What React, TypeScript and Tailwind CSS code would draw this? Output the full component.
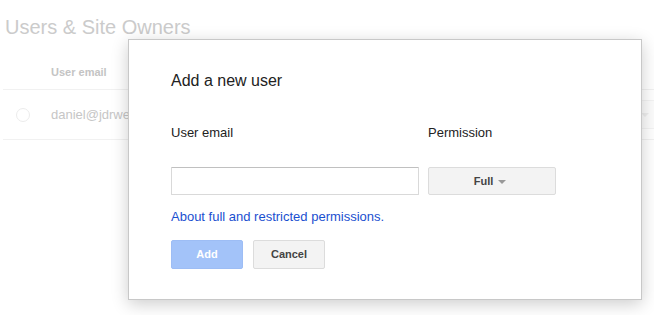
import React from "react";

export default function App() {
  return (
    <div
      className="relative w-[654px] h-[315px] overflow-hidden bg-white"
      style={{ fontFamily: '"Liberation Sans", Arial, sans-serif' }}
    >
      {/* background page (faded) */}
      <div className="pt-[15px]">
        <h1 className="pl-[5px] text-[20px] leading-[24px] text-[#cbcbcb]">Users &amp; Site Owners</h1>
        <div className="mt-[17px] pl-[3px]">
          <div className="h-[34px] flex items-center pl-[48px] text-[11px] font-bold text-[#c4c4c4] border-b border-[#f1f1f1]">
            User email
          </div>
          <div className="h-[50px] flex items-center border-b border-[#f1f1f1]">
            <div className="ml-[13px] w-[14px] h-[14px] rounded-full border border-[#ececec]" />
            <div className="ml-[21px] text-[13px] text-[#c6c6c6] flex-1">daniel@jdrwebdesign.com</div>
            <div className="mr-[-20px] w-[100px] h-[29px] border border-[#f3f3f3] bg-[#fcfcfc] flex items-center justify-end pr-[24px]">
              <div className="w-0 h-0 border-l-[4px] border-r-[4px] border-t-[4px] border-l-transparent border-r-transparent border-t-[#eeeeee]" />
            </div>
          </div>
        </div>
      </div>

      {/* dialog */}
      <div className="absolute left-[128px] top-[39px] w-[514px] h-[261px] bg-white border border-[#c8c8c8] shadow-[0_4px_16px_rgba(0,0,0,0.2)] pl-[42px] pt-[31px]">
        <div className="text-[16px] leading-[20px] text-[#222]">Add a new user</div>
        <div className="mt-[34px] grid grid-cols-[248px_128px] gap-x-[9px] text-[13px] leading-[16px] text-[#222]">
          <div>User email</div>
          <div>Permission</div>
        </div>
        <div className="mt-[26px] flex gap-[9px]">
          <input
            className="w-[248px] h-[28px] border border-[#d9d9d9] border-t-[#c0c0c0] rounded-[1px] px-[8px] text-[13px] outline-none"
          />
          <div className="w-[128px] h-[28px] border border-[#dcdcdc] rounded-[2px] bg-[#f3f3f3] flex items-center justify-center gap-[5px] pr-[4px]">
            <span className="text-[11px] font-bold text-[#444]">Full</span>
            <span className="w-0 h-0 border-l-[4px] border-r-[4px] border-t-[4px] border-l-transparent border-r-transparent border-t-[#999] mt-[1px]" />
          </div>
        </div>
        <div className="mt-[14px] text-[13px] leading-[16px] text-[#1a4fd0]">About full and restricted permissions.</div>
        <div className="mt-[15px] flex gap-[10px]">
          <div className="w-[72px] h-[29px] rounded-[2px] bg-[#a3c3f9] border border-[#9dbdf5] flex items-center justify-center text-[11px] font-bold text-white">
            Add
          </div>
          <div className="w-[72px] h-[29px] rounded-[2px] bg-[#f3f3f3] border border-[#dcdcdc] flex items-center justify-center text-[11px] font-bold text-[#444]">
            Cancel
          </div>
        </div>
      </div>
    </div>
  );
}
